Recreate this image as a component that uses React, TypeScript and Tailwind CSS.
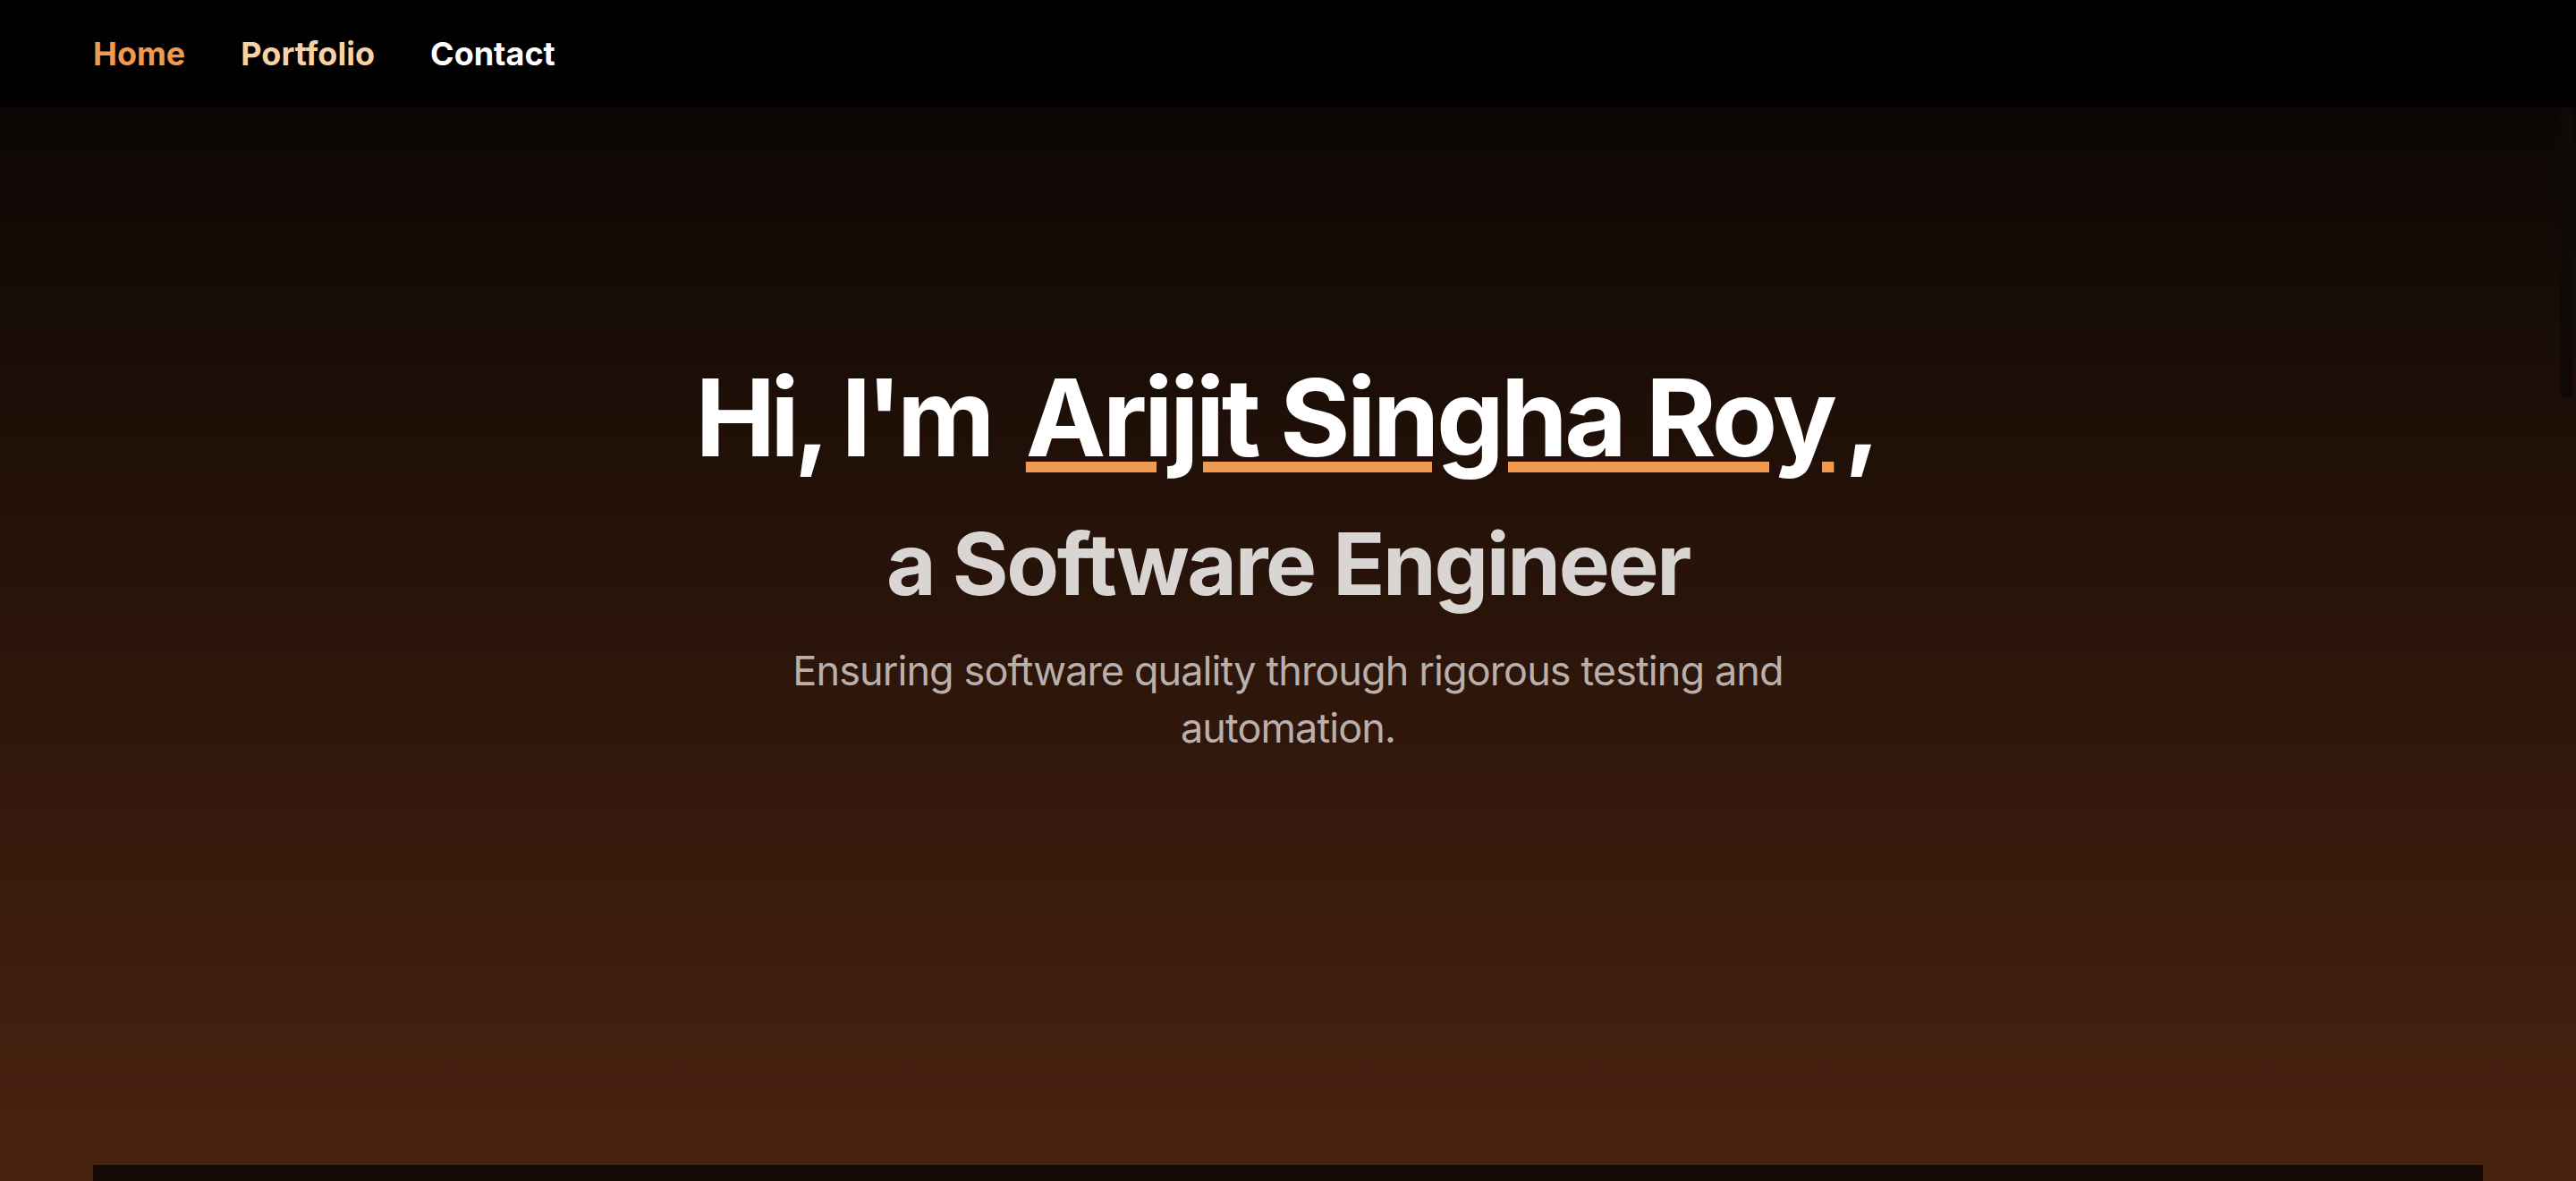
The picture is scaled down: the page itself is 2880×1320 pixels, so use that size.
export default function App() {
  return (
    <div className="min-h-screen bg-black font-['Inter',sans-serif] relative">
      <nav className="h-[120px] bg-black flex items-center gap-[62px] px-[104px]">
        <a href="#" className="text-[36px] font-bold text-[#ef9a4f]">Home</a>
        <a href="#" className="text-[36px] font-bold text-[#f8d2a6]">Portfolio</a>
        <a href="#" className="text-[36px] font-bold text-white">Contact</a>
      </nav>

      <main className="bg-[#4a2210] bg-[linear-gradient(to_bottom,#0c0704,#4a2210_1182px)]">
        <section className="h-[1182px] flex flex-col items-center pt-[287px] text-center">
          <h1 className="text-[120px] font-bold leading-none text-white">
            <span className="tracking-[-0.05em]">Hi, I'm</span>{" "}
            <span className="ml-[12px] tracking-[-0.03em] underline decoration-[#ef9a50] decoration-[12px] underline-offset-[6px]">
              Arijit Singha Roy
            </span>
            <span className="ml-[12px]">,</span>
          </h1>
          <h2 className="mt-[55px] text-[96px] font-bold leading-none text-[#d9d5d3] tracking-tight">
            a Software Engineer
          </h2>
          <p className="mt-[40px] max-w-[1160px] text-[45px] leading-[64px] tracking-[-0.02em] text-[#b9b0ab]">
            Ensuring software quality through rigorous testing and automation.
          </p>
        </section>

        <div className="mx-[104px] h-[400px] bg-[#150a03]" />
      </main>

      <div className="absolute right-[4px] top-[120px] h-[325px] w-[14px] rounded-full bg-[#0f0a07]" />
    </div>
  );
}
